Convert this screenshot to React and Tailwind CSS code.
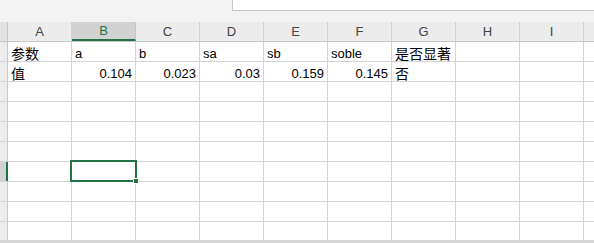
import React from 'react';

const cols = ['A', 'B', 'C', 'D', 'E', 'F', 'G', 'H', 'I', ''];

// cell contents: [text, align, cjk]
const data = [
  [['参数', 'l', true], ['a', 'l'], ['b', 'l'], ['sa', 'l'], ['sb', 'l'], ['soble', 'l'], ['是否显著', 'l', true]],
  [['值', 'l', true], ['0.104', 'r'], ['0.023', 'r'], ['0.03', 'r'], ['0.159', 'r'], ['0.145', 'r'], ['否', 'l', true]],
];

const Cell = ({ cell }) => {
  if (!cell) return <div className="w-[64px] h-full shrink-0 border-r border-[#d4d4d4]" />;
  const [text, align, cjk] = cell;
  return (
    <div
      className={`w-[64px] h-full shrink-0 border-r border-[#d4d4d4] flex items-end pb-[1px] ${align === 'r' ? 'justify-end pr-[3px]' : 'justify-start pl-[3px]'}`}
    >
      <span
        className={`leading-none whitespace-nowrap text-black ${cjk ? 'text-[14px] font-["Noto_Sans_CJK_SC",sans-serif]' : 'text-[13px] font-["Liberation_Sans","Noto_Sans_CJK_SC",sans-serif]'}`}
      >
        {text}
      </span>
    </div>
  );
};

export default function App() {
  const rows = Array.from({ length: 10 }, (_, i) => i);

  return (
    <div className="w-[594px] h-[243px] overflow-hidden bg-white relative font-['Liberation_Sans',sans-serif]">
      {/* formula bar strip */}
      <div className="h-[22px] bg-[#f3f3f3] flex">
        <div className="w-[232px] shrink-0" />
        <div className="flex-1 h-[11px] bg-white border-l border-b border-[#c6c6c6]" />
      </div>

      {/* column headers */}
      <div className="h-[20px] flex bg-[#ececec] border-b border-[#c6c6c6]">
        <div className="w-[8px] shrink-0 bg-[#e2e2e2] border-r border-[#c6c6c6]" />
        {cols.map((c, i) => (
          c === 'B' ? (
            <div key={i} className="w-[64px] shrink-0 bg-[#d2d2d2] border-r border-[#c6c6c6] border-b-2 border-b-[#217346] flex items-center justify-center text-[13px] text-[#217346]">
              {c}
            </div>
          ) : (
            <div key={i} className="w-[64px] shrink-0 border-r border-[#d0d0d0] flex items-center justify-center text-[13px] text-[#444]">
              {c}
            </div>
          )
        ))}
      </div>

      {/* grid rows */}
      {rows.map(r => (
        <div key={r} className="h-[20px] flex border-b border-[#d4d4d4]">
          <div className={`w-[8px] shrink-0 border-r border-[#c6c6c6] ${r === 6 ? 'bg-[#d2d2d2] border-r-2 border-r-[#217346]' : 'bg-[#ececec]'}`} />
          {cols.map((c, ci) => (
            <Cell key={ci} cell={data[r] ? data[r][ci] : null} />
          ))}
        </div>
      ))}

      {/* horizontal scroll edge */}
      <div className="absolute left-0 right-0 bottom-0 h-[3px] bg-[#d6d6d6]" />

      {/* active cell B7 */}
      <div className="absolute left-[70px] top-[160px] w-[67px] h-[22px] border-2 border-[#217346]" />
      <div className="absolute left-[133px] top-[178px] w-[6px] h-[6px] bg-[#217346] border border-white" />
    </div>
  );
}
